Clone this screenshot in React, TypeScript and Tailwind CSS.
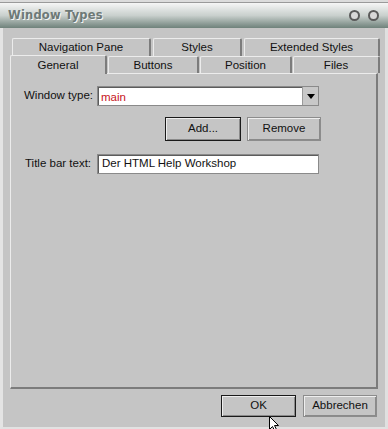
import React from "react";

const backTabs = [
  { label: "Navigation Pane", w: "w-[139px]" },
  { label: "Styles", w: "w-[89px]" },
  { label: "Extended Styles", w: "w-[136px]" },
];

const frontTabs = [
  { label: "Buttons", w: "w-[91px]" },
  { label: "Position", w: "w-[92px]" },
  { label: "Files", w: "w-[87px]" },
];

const Tab = ({ label, w }: { label: string; w: string }) => (
  <div
    className={`${w} h-full flex items-center justify-center pt-[1px] rounded-t-[2px] border-t border-l border-r-2 border-t-[#ececec] border-l-[#ececec] border-r-[#7c7c7c] bg-[#c5c5c5] text-[11.5px] text-[#111]`}
  >
    {label}
  </div>
);

const Button = ({ label, primary, w }: { label: string; primary?: boolean; w: string }) => (
  <button
    className={`${w} h-full flex items-center justify-center text-[11.5px] text-[#111] bg-[#c5c5c5] border ${
      primary ? "border-[#1a1a1a]" : "border-[#8c8c8c]"
    } shadow-[inset_1px_1px_0_#eeeeee,inset_-1px_-1px_0_#8a8a8a]`}
  >
    {label}
  </button>
);

const App = () => {
  return (
    <div className="w-[388px] h-[429px] flex flex-col bg-[#c5c5c5] overflow-hidden relative font-['Liberation_Sans',Arial,sans-serif]">
      <div className="h-[3px] bg-[#dcdcdc] border-b border-[#9a9a9a]" />

      {/* title bar */}
      <div className="h-[25px] flex items-center justify-between pl-[8px] pr-[9px] bg-gradient-to-b from-[#f6f6f6] via-[#c9d0cd] to-[#6f827b]">
        <span className="font-['DejaVu_Sans',sans-serif] font-bold text-[11.5px] tracking-[0.2px] text-[#6d7977] [text-shadow:1px_1px_0_#f4f4f4]">
          Window Types
        </span>
        <div className="flex gap-[8px] items-center">
          <div className="w-[11px] h-[11px] rounded-full border-[2px] border-[#5a5a5a] bg-[#d8d8d8]" />
          <div className="w-[11px] h-[11px] rounded-full border-[2px] border-[#5a5a5a] bg-[#d8d8d8]" />
        </div>
      </div>

      {/* body */}
      <div className="flex-1 flex flex-col border-l-[3px] border-l-[#e4e4e4] border-r-[3px] border-r-[#e0e0e0] border-b-[2px] border-b-[#e2e2e2] pl-[7px] pr-[5px]">
        {/* tabs */}
        <div className="mt-[10px] h-[18px] flex gap-[2px] pl-[2px]">
          {backTabs.map((t) => (
            <Tab key={t.label} {...t} />
          ))}
        </div>
        <div className="h-[17px] flex items-end gap-[1px] relative z-10">
          <div className="w-[97px] h-[19px] -mb-[1px] flex items-start justify-center pt-[1px] rounded-t-[2px] border-t border-l border-r-2 border-t-[#ececec] border-l-[#ececec] border-r-[#7c7c7c] bg-[#c5c5c5] text-[11.5px] text-[#111]">
            General
          </div>
          {frontTabs.map((t) => (
            <Tab key={t.label} {...t} />
          ))}
        </div>

        {/* panel */}
        <div className="w-[368px] h-[316px] flex flex-col border-t border-l border-t-[#ececec] border-l-[#ececec] border-r-2 border-b-2 border-r-[#7c7c7c] border-b-[#7c7c7c] pl-[13px] pt-[12px]">
          <div className="flex items-center h-[20px]">
            <span className="w-[73px] text-[11.5px] text-[#111]">Window type:</span>
            <div className="w-[222px] h-full flex bg-white border border-[#8a8a8a] shadow-[inset_1px_1px_0_#5c5c5c]">
              <span className="flex-1 pl-[3px] pt-[2px] text-[11.5px] text-[#c8141c] leading-[16px]">main</span>
              <div className="w-[16px] h-full flex items-center justify-center bg-[#c8c8c8] border-l border-[#9a9a9a]">
                <svg width="8" height="5" viewBox="0 0 8 5">
                  <path d="M0 0h8L4 5z" fill="#000" />
                </svg>
              </div>
            </div>
          </div>

          <div className="flex h-[24px] mt-[11px] pl-[141px] gap-[6px]">
            <Button label="Add..." primary w="w-[76px]" />
            <Button label="Remove" w="w-[74px]" />
          </div>

          <div className="flex items-center h-[20px] mt-[13px]">
            <span className="w-[73px] pl-[1px] text-[11.5px] text-[#111]">Title bar text:</span>
            <div className="w-[222px] h-full flex items-center bg-white border border-[#8a8a8a] shadow-[inset_1px_1px_0_#5c5c5c] pl-[4px] text-[11.5px] text-[#111]">
              Der HTML Help Workshop
            </div>
          </div>
        </div>

        {/* footer */}
        <div className="flex justify-end gap-[7px] h-[22px] mt-[6px] pr-[3px]">
          <Button label="OK" primary w="w-[75px]" />
          <Button label="Abbrechen" w="w-[74px]" />
        </div>
      </div>

      {/* mouse pointer */}
      <svg className="absolute left-[269px] top-[416px]" width="12" height="16" viewBox="0 0 12 16">
        <path d="M0.5 0.5v13l3-3 2.5 5 2-1-2.5-5h4z" fill="#fff" stroke="#000" strokeWidth="1" />
      </svg>
    </div>
  );
};

export default App;
